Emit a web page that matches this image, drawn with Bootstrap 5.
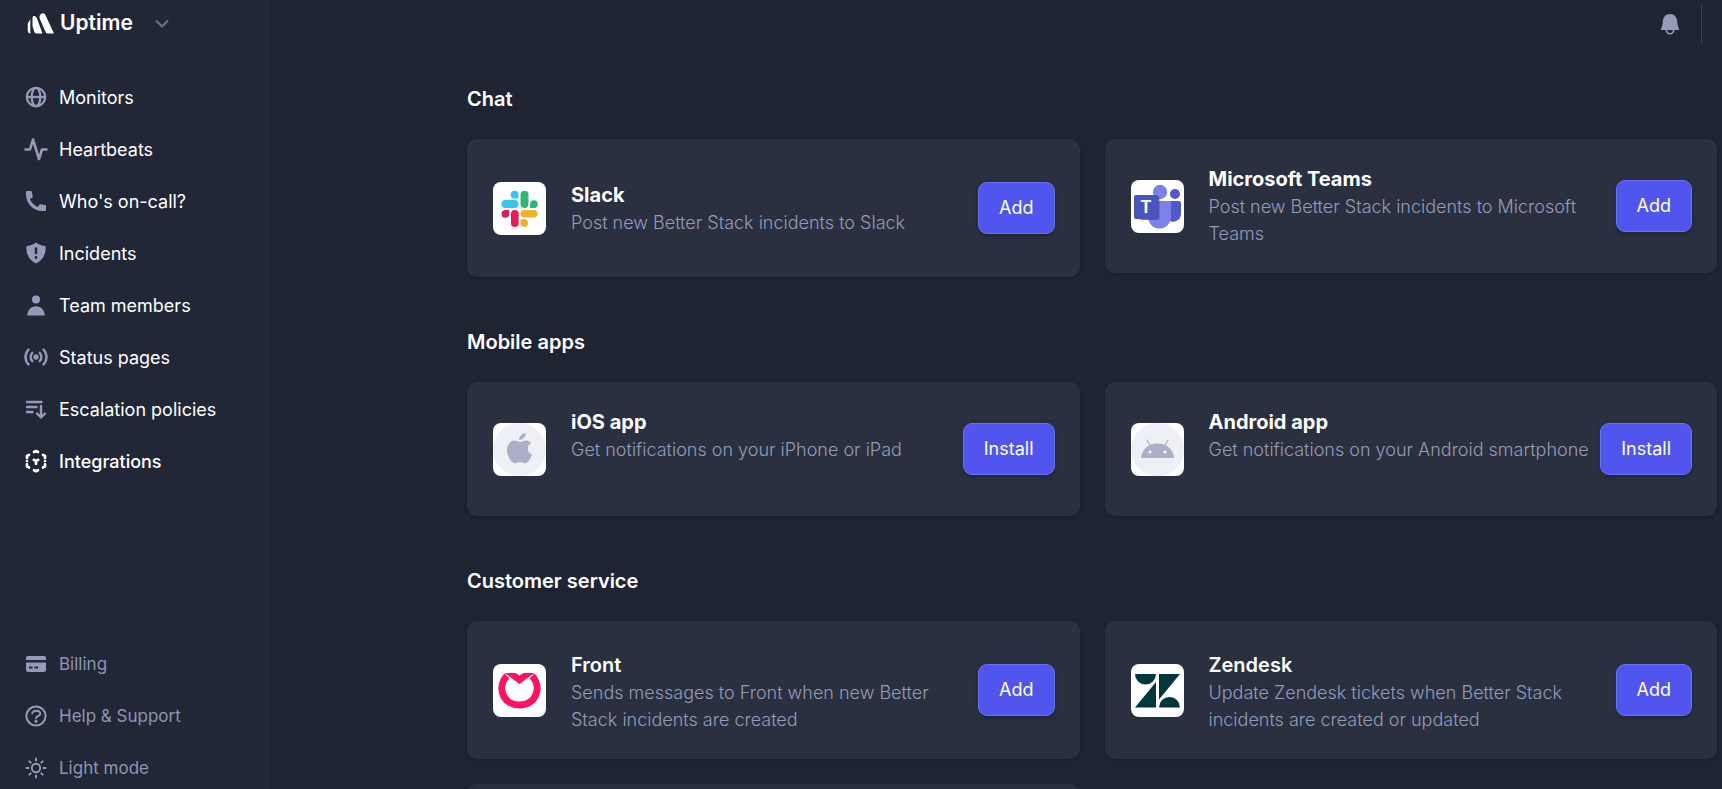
<!DOCTYPE html>
<html lang="en">
<head>
<meta charset="utf-8">
<meta name="viewport" content="width=device-width, initial-scale=1">
<title>Integrations · Uptime</title>
<link rel="stylesheet" href="https://cdn.jsdelivr.net/npm/bootstrap@5.3.0/dist/css/bootstrap.min.css">
<style>
  body { background: #1f2432; color: #fff; font-family: Inter, sans-serif; font-size: 18px; line-height: 27px; }
  .app { height: 100vh; overflow: hidden; }
  .side { width: 269px; background: #222737; border-right: 1px solid #2a3042; padding: 9px 16px 3px 24px; }
  .brand-btn { color: #fff; font-size: 21px; font-weight: 600; line-height: 28px; margin-bottom: 42px; gap: 6px; }
  .brand-btn .chevron { margin-left: 16px; }
  .side-nav { gap: 16px; }
  .side-link { display: flex; align-items: center; gap: 11px; height: 36px; color: #fff; text-decoration: none; white-space: nowrap; }
  .side-link svg { width: 24px; height: 24px; color: #949bb8; flex: none; }
  .side-link.current { font-weight: 500; }
  .side-link.current svg { color: #fff; }
  .side-nav.minor .side-link { color: #8e95b3; font-size: 17px; }
  .main-top { height: 48px; padding: 4px 20px 0 0; }
  .bell-btn { height: 40px; }
  .main-top .divider { width: 1px; height: 40px; background: #3a4054; margin-left: 18px; }
  .content { padding: 36px 5px 0 198px; }
  .group { margin-bottom: 50px; }
  .group h2 { font-size: 20px; font-weight: 600; line-height: 30px; margin: 0 0 25px; }
  .tiles { display: grid; grid-template-columns: 1fr 1fr; gap: 25px; align-items: start; }
  .tile { min-width: 0; min-height: 134px; background: #2a3040; border-radius: 10px; padding: 26px 25px 26px 26px; gap: 8px; box-shadow: 0 1px 3px #191e2b; }
  .tile.tall { min-height: 138px; }
  .logo { width: 53px; height: 53px; border-radius: 8px; flex: none; background: #fff; margin-right: 17px; }
  .tile h3 { font-size: 20px; font-weight: 700; line-height: 28px; margin: 0; }
  .tile p { color: #949bba; font-weight: 300; margin: 0; }
  .service .tile h3 { font-weight: 600; padding-top: 4px; }
  .btn-add { --bs-btn-color: #fff; --bs-btn-bg: #5056ed; --bs-btn-border-color: #6c70f4; --bs-btn-hover-color: #fff; --bs-btn-hover-bg: #5f65f2; --bs-btn-hover-border-color: #7a7ef6; --bs-btn-font-size: 18px; --bs-btn-font-weight: 400; --bs-btn-padding-x: 20px; --bs-btn-border-radius: 9px; height: 52px; line-height: 27px; padding-bottom: 8px; flex: none; box-shadow: 0 2px 4px #1f2433; }
</style>
</head>
<body>
<div class="app d-flex">
  <aside class="side d-flex flex-column flex-shrink-0">
    <button type="button" class="brand-btn btn border-0 p-0 d-flex align-items-center align-self-start" aria-label="Uptime menu">
      <svg width="30" height="24" viewBox="0 0 30 24" fill="#fff" aria-hidden="true"><path d="M6.300 8V22.500C4.500 22.500 3.700 20.500 3.700 18.500V13Z"/><path d="M10 5C11.500 5 12.400 6 13 7.500L18.500 22.500H12.500C11.200 22.500 10.600 21.500 10.100 20.200L8.500 15V7C8.500 5.800 9 5 10 5Z"/><path d="M18 2.500C19.500 2 21 3 21.600 4.500L30 22.500H24C22.500 22.500 21.800 21.700 21.200 20.300L15.700 7.500C14.900 5.500 16 3.200 18 2.500Z"/></svg>
      <span>Uptime</span>
      <svg class="chevron" width="14" height="14" viewBox="0 0 14 14" fill="none" stroke="#6b7390" stroke-width="2" stroke-linecap="round" stroke-linejoin="round" aria-hidden="true"><path d="m1.500 5 5.500 5.500L12.500 5"/></svg>
    </button>
    <nav class="side-nav d-flex flex-column" aria-label="Main">
      <a class="side-link" href="#"><svg viewBox="0 0 24 24" fill="none" stroke="currentColor" stroke-width="2.300"><circle cx="12" cy="12" r="9.200"/><path d="M2.700 12h18.600"/><ellipse cx="12" cy="12" rx="4.300" ry="9.200"/></svg>Monitors</a>
      <a class="side-link" href="#"><svg viewBox="0 0 24 24" fill="none" stroke="currentColor" stroke-width="2.600" stroke-linecap="round" stroke-linejoin="round"><path d="M1.500 12.500H6L9 2.500l6 19.500 3-9.500h4.500"/></svg>Heartbeats</a>
      <a class="side-link" href="#"><svg viewBox="0 0 24 24" fill="currentColor"><path d="M2 3c0-.6.400-1 1-1h3.800c.6 0 1 .4 1.100.9l.8 4.700c.1.500-.1.900-.5 1.100L5.900 9.900a15.500 15.500 0 0 0 8.200 8.200l1.200-2.300c.2-.4.700-.6 1.100-.5l4.700.8c.5.100.9.500.9 1V21c0 .6-.4 1-1 1h-2.500C9.400 22 2 14.600 2 5.500Z"/></svg>Who's on-call?</a>
      <a class="side-link" href="#"><svg viewBox="0 0 24 24"><path fill="currentColor" d="M12 1.500c2.800 2.200 6 3.400 9.500 3.600.9 7.500-2.500 14-9.500 17.400C5 19.100 1.600 12.600 2.500 5.100 6 4.900 9.200 3.700 12 1.500Z"/><path stroke="#222737" stroke-width="2.500" stroke-linecap="round" d="M12 7.500v4.500"/><circle cx="12" cy="16.500" r="1.400" fill="#222737"/></svg>Incidents</a>
      <a class="side-link" href="#"><svg viewBox="0 0 24 24" fill="currentColor"><circle cx="12" cy="6.500" r="4"/><path d="M3.300 22.500c0-5 3.500-9.200 8.700-9.200s8.700 4.200 8.700 9.200Z"/></svg>Team members</a>
      <a class="side-link" href="#"><svg viewBox="0 0 24 24" fill="none" stroke="currentColor" stroke-width="2.400" stroke-linecap="round"><circle cx="12" cy="12" r="2.700" fill="currentColor" stroke="none"/><path d="M8.300 7.800a6 6 0 0 0 0 8.400M15.700 7.800a6 6 0 0 1 0 8.400M4.600 4.500a10.700 10.700 0 0 0 0 15M19.400 4.500a10.700 10.700 0 0 1 0 15"/></svg>Status pages</a>
      <a class="side-link" href="#"><svg viewBox="0 0 24 24" fill="none" stroke="currentColor" stroke-width="2.400" stroke-linecap="round" stroke-linejoin="round"><path d="M3 5h14.500M3 10h9.500M3 15h5.500M17 9v11M13 16.500l4 4 4-4"/></svg>Escalation policies</a>
      <a class="side-link current" href="#" aria-current="page"><svg viewBox="0 0 24 24" fill="none" stroke="currentColor" stroke-width="2.700" stroke-linecap="round" stroke-linejoin="round"><path d="m10 3 2-1 2 1M10 21.200l2 1 2-1M3 9V7l2-1.200M21 9V7l-2-1.200M3 15.300v2l2 1.200M21 15.300v2l-2 1.200M9.800 10.800 12 12l2.200-1.200M12 12v2.800M3 12v.1M21 12v.1"/></svg>Integrations</a>
    </nav>
    <nav class="side-nav minor d-flex flex-column mt-auto" aria-label="Account">
      <a class="side-link" href="#"><svg viewBox="0 0 24 24"><path fill="currentColor" d="M4 4h16a2 2 0 0 1 2 2v2H2V6a2 2 0 0 1 2-2ZM2 10.500h20V18a2 2 0 0 1-2 2H4a2 2 0 0 1-2-2Z"/><path stroke="#222737" stroke-width="2" d="M5 15.500h3.500M10.500 15.500H14"/></svg>Billing</a>
      <a class="side-link" href="#"><svg viewBox="0 0 24 24" fill="none" stroke="currentColor" stroke-width="2" stroke-linecap="round" stroke-linejoin="round"><circle cx="12" cy="12" r="9.600"/><path d="M8.200 9.200C9 7.300 10.400 6.700 12.200 6.700c2.400 0 4 1.100 4 3 0 2.400-4.200 2.300-4.200 4.600"/><circle cx="12" cy="17.300" r=".6" fill="currentColor"/></svg>Help &amp; Support</a>
      <a class="side-link" href="#"><svg viewBox="0 0 24 24" fill="none" stroke="currentColor" stroke-width="1.900" stroke-linecap="round"><circle cx="12" cy="12" r="4.200"/><path d="M12 2.500v2M12 19.500v2M2.500 12h2M19.500 12h2M5.300 5.300l1.400 1.400M17.300 17.300l1.400 1.400M5.300 18.700l1.400-1.400M17.300 6.700l1.400-1.400"/></svg>Light mode</a>
    </nav>
  </aside>
  <main class="flex-grow-1">
    <div class="main-top d-flex justify-content-end align-items-start">
      <button type="button" class="bell-btn btn border-0 p-0 d-flex align-items-center" aria-label="Notifications"><svg width="26" height="26" viewBox="0 0 26 26"><path fill="#949bb8" d="M13 3c4.500 0 7 3.300 7.200 7.500.2 3.200.8 5.500 2.200 8.500H3.600c1.400-3 2-5.300 2.200-8.500C6 6.300 8.500 3 13 3Z"/><path fill="none" stroke="#949bb8" stroke-width="1.600" d="M9.300 19c.3 2.500 1.700 3.700 3.700 3.700s3.400-1.200 3.700-3.700"/></svg></button>
      <span class="divider"></span>
    </div>
    <div class="content">
      <section class="group">
        <h2>Chat</h2>
        <div class="tiles">
          <article class="tile tall d-flex align-items-center">
            <svg class="logo" viewBox="0 0 53 53" aria-hidden="true"><g fill="#36c5f0"><rect x="8.500" y="18" width="17" height="8" rx="4"/><path d="M25.500 16.500h-3.800a3.900 3.900 0 1 1 3.800-3.900Z"/></g><g fill="#2eb67d"><rect x="27.500" y="8.700" width="8" height="17.300" rx="4"/><path d="M37 26v-4a3.900 3.900 0 1 1 4 4Z"/></g><g fill="#ecb22e"><rect x="27.500" y="28" width="17" height="7.500" rx="3.700"/><path d="M27.500 37.300h4a3.800 3.800 0 1 1-4 4Z"/></g><g fill="#e01e5a"><rect x="18" y="28" width="7.700" height="17" rx="3.800"/><path d="M16.300 28v3.800a3.900 3.900 0 1 1-3.900-3.800Z"/></g></svg>
            <div class="flex-grow-1"><h3>Slack</h3><p>Post new Better Stack incidents to Slack</p></div>
            <button type="button" class="btn btn-add">Add</button>
          </article>
          <article class="tile d-flex align-items-center">
            <svg class="logo" viewBox="0 0 53 53" aria-hidden="true"><circle cx="44" cy="14" r="5" fill="#5059c9"/><path fill="#5059c9" d="M36 21h12a2 2 0 0 1 2 2v11a8 8 0 0 1-14 5Z"/><circle cx="29" cy="12" r="7.200" fill="#7b83eb"/><path fill="#7b83eb" d="M18 21h20a2 2 0 0 1 2 2v14a11.500 11.500 0 0 1-23 0V22Z"/><rect x="9" y="16" width="19.500" height="24" rx="2" fill="#3d4390" opacity=".7"/><rect x="3" y="15" width="24" height="24" rx="2" fill="#4b53bc"/><text x="15" y="33" text-anchor="middle" font-family="Inter" font-weight="700" font-size="17" fill="#fff">T</text></svg>
            <div class="flex-grow-1"><h3>Microsoft Teams</h3><p>Post new Better Stack incidents to Microsoft Teams</p></div>
            <button type="button" class="btn btn-add">Add</button>
          </article>
        </div>
      </section>
      <section class="group">
        <h2>Mobile apps</h2>
        <div class="tiles">
          <article class="tile d-flex align-items-center">
            <svg class="logo" viewBox="0 0 53 53" aria-hidden="true"><circle cx="26.500" cy="26.500" r="26.500" fill="#eff0f5"/><path fill="#abafc7" d="M32.500 10c.3 3.400-2.600 7-6.300 7-.3-3.300 2.700-6.700 6.300-7ZM27 19.200c1.400 0 3.300-1.700 6-1.700 2.200 0 4 1 5.200 2.600-5 3-4.200 9.600.8 11.500-1.200 3.500-3.700 8.700-7 8.700-1.800 0-2.800-1.200-5-1.200-2.300 0-3.400 1.200-5 1.200-3.300 0-8-6.600-8-13.200 0-5.800 3.600-9.500 7.600-9.500 2.300 0 4 1.600 5.400 1.600Z"/></svg>
            <div class="flex-grow-1 align-self-start"><h3>iOS app</h3><p>Get notifications on your iPhone or iPad</p></div>
            <button type="button" class="btn btn-add">Install</button>
          </article>
          <article class="tile d-flex align-items-center">
            <svg class="logo" viewBox="0 0 53 53" aria-hidden="true"><circle cx="26.500" cy="26.500" r="26.500" fill="#eff0f5"/><path fill="#abafc7" d="M10 35c.5-8.500 7.500-14.500 16.500-14.500S42.500 26.500 43 35Z"/><path stroke="#abafc7" stroke-width="1.300" stroke-linecap="round" d="m19 22-3-5M34 22l3-5"/><circle cx="19" cy="29" r="1.500" fill="#fff"/><circle cx="34" cy="29" r="1.500" fill="#fff"/></svg>
            <div class="flex-grow-1 align-self-start"><h3>Android app</h3><p>Get notifications on your Android smartphone</p></div>
            <button type="button" class="btn btn-add">Install</button>
          </article>
        </div>
      </section>
      <section class="group service">
        <h2>Customer service</h2>
        <div class="tiles">
          <article class="tile tall d-flex align-items-center">
            <svg class="logo" viewBox="0 0 53 53" aria-hidden="true"><path fill="none" stroke="#ff1266" stroke-width="7" d="M14 12C4 22 9 41 26.500 41S49 22 39 12"/><path fill="#ff1266" d="M11.500 9h11l4 2.500 4-2.500h11L26.500 20Z"/></svg>
            <div class="flex-grow-1 pe-3"><h3>Front</h3><p>Sends messages to Front when new Better Stack incidents are created</p></div>
            <button type="button" class="btn btn-add">Add</button>
          </article>
          <article class="tile tall d-flex align-items-center">
            <svg class="logo" viewBox="0 0 53 53" fill="#03363d" aria-hidden="true"><path d="M4 10h21a10.500 10.500 0 0 1-21 0ZM28 10h21L28 35.500ZM25 18v25.500H4ZM28 43.500a10.500 10.500 0 0 1 21 0Z"/></svg>
            <div class="flex-grow-1 pe-3"><h3>Zendesk</h3><p>Update Zendesk tickets when Better Stack incidents are created or updated</p></div>
            <button type="button" class="btn btn-add">Add</button>
          </article>
          <article class="tile tall"></article>
        </div>
      </section>
    </div>
  </main>
</div>
<script src="https://cdn.jsdelivr.net/npm/bootstrap@5.3.0/dist/js/bootstrap.bundle.min.js"></script>
</body>
</html>
